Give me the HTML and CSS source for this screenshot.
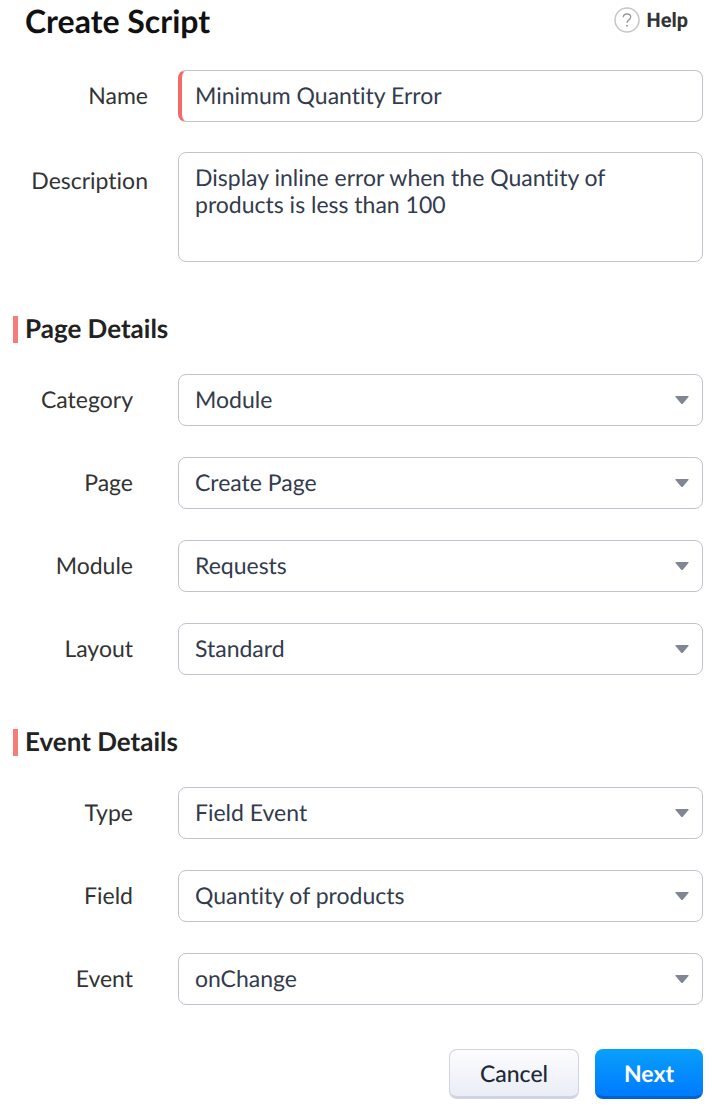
FILE: index.html
```html
<!DOCTYPE html>
<html lang="en">
<head>
<meta charset="utf-8">
<title>Create Script</title>
<link rel="stylesheet" href="styles.css">
</head>
<body>
<form class="page">
  <header class="header">
    <h1 class="title">Create Script</h1>
    <a class="help" href="#"><svg class="help-icon" viewBox="0 0 26 26" aria-hidden="true"><circle cx="13" cy="13" r="12" fill="none" stroke="#c6c6c6" stroke-width="1.5"/><path d="M9.3 10.3C9.3 8.2 10.8 7 13 7s3.7 1.2 3.7 3.1c0 2.8-3.7 2.8-3.7 6" fill="none" stroke="#999" stroke-width="1.3"/><circle cx="13" cy="18.8" r="1" fill="#999"/></svg>Help</a>
  </header>
  <div class="basics">
    <div class="row">
      <label class="label wide" for="name">Name</label>
      <input class="control required" id="name" type="text" value="Minimum Quantity Error">
    </div>
    <div class="row top">
      <label class="label wide" for="desc">Description</label>
      <textarea class="control area" id="desc">Display inline error when the Quantity of products is less than 100</textarea>
    </div>
  </div>
  <section class="section">
    <h2 class="section-title">Page Details</h2>
    <div class="row"><label class="label" for="category">Category</label><select class="control select" id="category"><option>Module</option></select></div>
    <div class="row"><label class="label" for="pg">Page</label><select class="control select" id="pg"><option>Create Page</option></select></div>
    <div class="row"><label class="label" for="module">Module</label><select class="control select" id="module"><option>Requests</option></select></div>
    <div class="row"><label class="label" for="layout">Layout</label><select class="control select" id="layout"><option>Standard</option></select></div>
  </section>
  <section class="section">
    <h2 class="section-title">Event Details</h2>
    <div class="row"><label class="label" for="type">Type</label><select class="control select" id="type"><option>Field Event</option></select></div>
    <div class="row"><label class="label" for="field">Field</label><select class="control select" id="field"><option>Quantity of products</option></select></div>
    <div class="row"><label class="label" for="event">Event</label><select class="control select" id="event"><option>onChange</option></select></div>
  </section>
  <footer class="actions">
    <button class="button" type="button">Cancel</button>
    <button class="button primary" type="submit">Next</button>
  </footer>
</form>
</body>
</html>
```
FILE: styles.css
```css
* { box-sizing: border-box; }
body { margin: 0; background: #fff; color: #333; font-family: Lato, sans-serif; font-size: 23px; font-variant-ligatures: none; text-rendering: geometricPrecision; }
.page { padding: 0 9px 11px 13px; }
.header { display: flex; justify-content: space-between; align-items: flex-start; padding: 1px 15px 29px 12px; }
.title { margin: 0; font-size: 32px; line-height: 40px; color: #111; }
.help { display: flex; align-items: center; gap: 7px; padding-top: 6px; font-family: Roboto, sans-serif; font-size: 20px; line-height: 26px; font-weight: 700; color: #333; text-decoration: none; }
.help-icon { width: 26px; height: 26px; }
.basics { display: grid; gap: 30px; }
.row { display: grid; grid-template-columns: 135px 1fr; column-gap: 30px; align-items: center; }
.row.top { align-items: start; }
.label { padding: 0 15px 2px 0; text-align: right; line-height: 28px; }
.label.wide { padding-right: 0; }
.top .label { padding-top: 14px; }
.control { display: block; width: 100%; height: 52px; margin: 0; padding: 0 16px 3px; border: 1px solid #bfc4cd; border-radius: 8px; background: #fff; color: #333b4d; font: inherit; font-variant-ligatures: none; text-rendering: inherit; outline: none; }
.required { border-left: 4px solid #f46a68; padding-left: 13px; }
.area { height: 110px; padding-top: 11px; line-height: 27px; resize: none; overflow: hidden; }
.select { appearance: none; background: #fff url("data:image/svg+xml,%3Csvg xmlns='http://www.w3.org/2000/svg' width='14' height='8'%3E%3Cpath d='M1 0h12q1 0 .5 1L8 7.5q-1 1-2 0L.5 1Q0 0 1 0z' fill='%23818693'/%3E%3C/svg%3E") no-repeat right 13px center; }
.section { display: grid; gap: 31px; margin-top: 54px; }
.section-title { margin: 0; padding: 0 0 2px 7px; border-left: 5px solid #f47d7a; font-size: 26px; line-height: 25px; color: #222; }
.actions { display: flex; justify-content: flex-end; gap: 16px; margin-top: 44px; }
.button { min-width: 130px; height: 50px; padding: 0 16px; border: 1px solid #d0d4e2; border-bottom-width: 3px; border-radius: 8px; background: linear-gradient(#fdfdff, #eaedf6); color: #222936; font: inherit; font-weight: 500; text-rendering: inherit; }
.primary { min-width: 108px; border: 0; border-bottom: 3px solid #0062cc; background: linear-gradient(#08a0fa, #007aff); color: #fff; font-weight: 700; }
```
